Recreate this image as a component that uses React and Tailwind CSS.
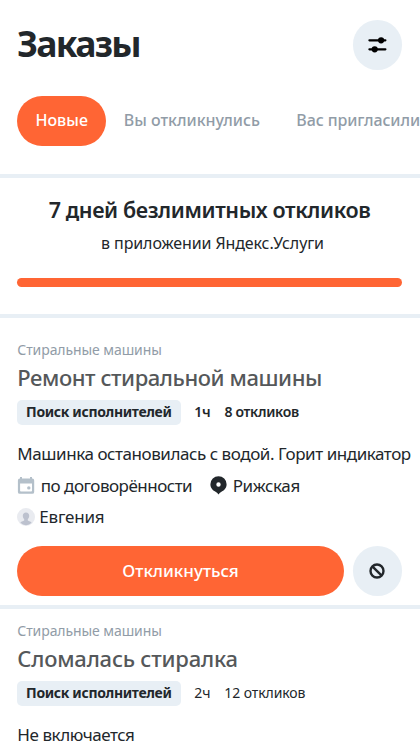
const orders = [
  {
    id: 1,
    category: 'Стиральные машины',
    title: 'Ремонт стиральной машины',
    titleClass: 'tracking-[-0.43px]',
    status: 'Поиск исполнителей',
    age: '1ч',
    replies: '8 откликов',
    metaClass: 'font-semibold tracking-[-0.3px]',
    description: 'Машинка остановилась с водой. Горит индикатор',
    price: 'по договорённости',
    place: 'Рижская',
    client: 'Евгения',
  },
  {
    id: 2,
    category: 'Стиральные машины',
    title: 'Сломалась стиралка',
    titleClass: 'tracking-[-0.2px]',
    status: 'Поиск исполнителей',
    age: '2ч',
    replies: '12 откликов',
    metaClass: 'font-normal tracking-[-0.1px]',
    description: 'Не включается',
  },
]

function SlidersIcon() {
  return (
    <svg width="20" height="20" viewBox="0.8 0.4 20 20" fill="none" aria-hidden="true">
      <path d="M2.200 5.700h16M2.200 14.700h16" stroke="#000" strokeWidth="2.2" strokeLinecap="round" />
      <circle cx="13.9" cy="5.7" r="3.1" fill="#000" />
      <circle cx="7.5" cy="14.7" r="3.1" fill="#000" />
    </svg>
  )
}

function CalendarIcon() {
  return (
    <svg width="18" height="18" viewBox="0 0.4 18 18" aria-hidden="true">
      <path
        fillRule="evenodd"
        fill="#b4c0ca"
        d="M3 .5h2V2h8V.5h2V2h.3A1.9 1.9 0 0 1 17.2 3.9v11.4a1.9 1.9 0 0 1-1.9 1.9H2.8a1.9 1.9 0 0 1-1.9-1.9V3.9A1.9 1.9 0 0 1 2.8 2H3zM3.1 7v7.200c0 .5.3.8.8.8h10.300c.5 0 .8-.3.8-.8V7z"
      />
      <circle cx="11.8" cy="11.3" r="1.7" fill="#b4c0ca" />
    </svg>
  )
}

function PinIcon() {
  return (
    <svg width="18" height="20" viewBox="0.5 0.8 18 20" aria-hidden="true">
      <path
        fillRule="evenodd"
        fill="#22272b"
        d="M9 1a8.1 8.1 0 0 1 8.1 8.1c0 3.9-2.6 6.5-5.5 7.6-1.1.5-1.8 1.3-2.6 2.6-.8-1.3-1.5-2.1-2.6-2.6C3.5 15.6.9 13 .9 9.1A8.1 8.1 0 0 1 9 1zm0 6.1a2.2 2.2 0 1 0 0 4.4 2.2 2.2 0 0 0 0-4.4z"
      />
    </svg>
  )
}

function AvatarIcon() {
  return (
    <svg width="18" height="18" viewBox="0 0 18 18" aria-hidden="true">
      <circle cx="9" cy="9" r="9" fill="#e9ebf0" />
      <path
        fill="#bcc1ce"
        d="M9 4.5c2 0 3.2 1.3 3.2 3.3 0 1.4-.6 2.7-1.4 3.4v1c0 .6 3 1 3.8 2.6A8 8 0 0 1 9 17.2a8 8 0 0 1-5.6-2.4c.8-1.6 3.8-2 3.8-2.6v-1c-.8-.7-1.4-2-1.4-3.4 0-2 1.2-3.3 3.2-3.3z"
      />
    </svg>
  )
}

function BlockIcon() {
  return (
    <svg width="16" height="16" viewBox="0 0 16 16" fill="none" stroke="#22272b" strokeWidth="2.4" aria-hidden="true">
      <circle cx="8" cy="8" r="6.5" />
      <path d="M3.6 3.6l8.8 8.8" />
    </svg>
  )
}

function Divider() {
  return <div className="h-1 shrink-0 bg-[#e8eff5]" />
}

function OrderCard({ order, className }) {
  return (
    <article className={`flex flex-col pl-[17.3px] whitespace-nowrap ${className}`}>
      <p className="text-sm leading-5 tracking-[-0.08px] text-[#919ca7]">{order.category}</p>
      <h3 className={`mt-0.5 text-[22px] leading-[30px] font-medium text-[#55585a] ${order.titleClass}`}>
        {order.title}
      </h3>
      <div className={`mt-2 flex h-[25px] items-center text-sm leading-5 ${order.metaClass}`}>
        <span className="flex h-[25px] w-[164px] items-center justify-center rounded-[5px] bg-[#e8eff5] pr-px pb-px font-bold tracking-[-0.35px]">
          {order.status}
        </span>
        <span className="ml-[13px] pb-px">{order.age}</span>
        <span className="ml-[14px] pb-px">{order.replies}</span>
      </div>
      <p className="mt-[17px] text-[17px] leading-6 tracking-[-0.44px]">{order.description}</p>

      {order.client && (
        <>
          <div className="mt-2 flex h-6 items-center text-[17px]">
            <CalendarIcon />
            <span className="ml-[5.5px] tracking-[-0.5px]">{order.price}</span>
            <span className="ml-[18px]">
              <PinIcon />
            </span>
            <span className="ml-[4.5px] tracking-[-0.35px]">{order.place}</span>
          </div>
          <div className="mt-[7px] flex h-6 items-center text-[17px]">
            <AvatarIcon />
            <span className="ml-1 tracking-[-0.2px]">{order.client}</span>
          </div>
          <div className="mt-[17px] flex gap-[9px]">
            <button className="h-[50px] w-[326.5px] rounded-[25px] bg-[#ff6534] text-[17px] font-medium text-white">
              Откликнуться
            </button>
            <button
              className="flex h-[50px] w-[49px] items-center justify-center rounded-full bg-[#e8eff5]"
              aria-label="Скрыть заказ"
            >
              <BlockIcon />
            </button>
          </div>
        </>
      )}
    </article>
  )
}

export default function App() {
  return (
    <main className="flex h-[747px] w-[420px] flex-col overflow-hidden bg-white font-['Noto_Sans',sans-serif] text-[#22272b]">
      <header className="flex items-center justify-between pt-5 pr-[18px] pl-[17px]">
        <h1 className="pb-[3px] text-[35.5px] leading-[47px] font-bold tracking-[-1.7px]">Заказы</h1>
        <button
          className="flex h-[50px] w-[49px] items-center justify-center rounded-full bg-[#e8eff5]"
          aria-label="Фильтры"
        >
          <SlidersIcon />
        </button>
      </header>

      <nav className="mt-[26px] mb-7 flex h-[50px] shrink-0 items-center pl-[17.3px] text-base font-medium whitespace-nowrap text-[#919ca7]">
        <a className="flex h-[50px] w-[89px] items-center justify-center rounded-[25px] bg-[#ff6534] pb-0.5 text-white">
          Новые
        </a>
        <a className="ml-[17.7px] w-[138px] pb-0.5">Вы откликнулись</a>
        <a className="ml-[35px] pb-0.5 tracking-[-0.1px]">Вас пригласили</a>
      </nav>

      <Divider />
      <section className="flex h-[136px] shrink-0 flex-col items-center pr-[18px] pl-[17px]">
        <h2 className="mt-[17px] text-[21.5px] leading-[30px] font-semibold tracking-[-0.4px] whitespace-nowrap">
          7 дней безлимитных откликов
        </h2>
        <p className="mt-1.5 pl-1.5 text-base leading-6 tracking-[-0.1px]">в приложении Яндекс.Услуги</p>
        <div className="mt-[23px] h-[9px] w-full rounded-full bg-[#ff6534]" />
      </section>
      <Divider />

      <OrderCard order={orders[0]} className="pt-[22px] pb-[9px]" />
      <Divider />
      <OrderCard order={orders[1]} className="pt-3" />
    </main>
  )
}
